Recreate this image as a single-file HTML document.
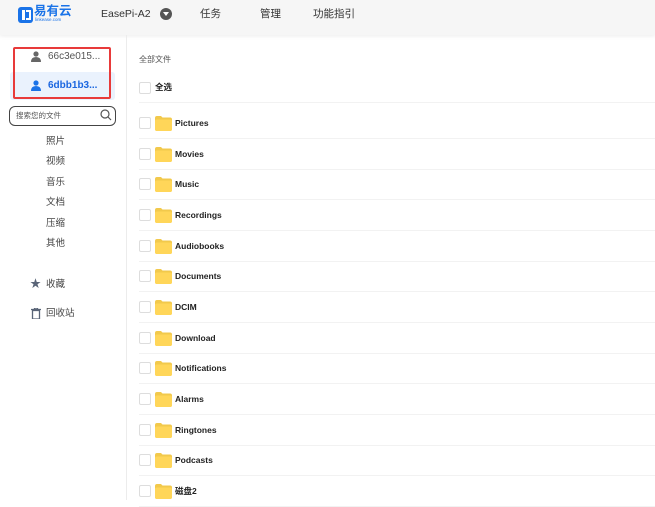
<!DOCTYPE html>
<html><head><meta charset="utf-8"><style>
body{margin:0;width:655px;height:500px;overflow:hidden;background:#fff;font-family:"Liberation Sans","Noto Sans CJK SC",sans-serif;position:relative}
.hdr{position:absolute;left:0;top:0;width:655px;height:35px;background:#f6f6f6;box-shadow:0 1px 4px rgba(0,0,0,.08)}
.hdr span{position:absolute;top:7px;font-size:10.5px;color:#333;line-height:14px}
.side{position:absolute;left:0;top:35px;width:126px;height:465px;border-right:1px solid #ececec}
.abs{position:absolute}
.cb{position:absolute;width:10px;height:10px;border:1px solid #ddd;border-radius:2px;background:#fff}
.row{position:absolute;left:139px;width:516px;height:30px;border-bottom:1px solid #f2f2f2}
.fold{position:absolute;left:16px;top:8px;width:17px;height:15px}
.nm{position:absolute;left:36px;top:8px;font-size:8.5px;font-weight:bold;color:#222;line-height:15px}
.cat{position:absolute;left:46px;font-size:9.5px;color:#444;line-height:12px}
</style></head><body>
<div class="hdr">
<div class="abs" style="left:18px;top:7px;width:15px;height:16px;background:#1a73e8;border-radius:3px"></div>
<div class="abs" style="left:22px;top:10px;width:3px;height:10px;background:#fff"></div>
<div class="abs" style="left:26px;top:10px;width:5px;height:10px;border:2px solid #fff;border-left:0;box-sizing:border-box"></div>
<span style="left:34px;top:4px;font-size:12.5px;font-weight:bold;color:#1a73e8">易有云</span>
<span style="left:35px;top:17px;font-size:4.5px;color:#1a73e8;line-height:6px">linkease.com</span>
<span style="left:101px">EasePi-A2</span>
<div class="abs" style="left:160px;top:8px;width:12px;height:12px;border-radius:50%;background:#555"></div>
<div class="abs" style="left:163px;top:12px;border-left:3px solid transparent;border-right:3px solid transparent;border-top:4px solid #fff"></div>
<span style="left:200px">任务</span><span style="left:260px">管理</span><span style="left:313px">功能指引</span>
</div>
<div class="side">
<div class="abs" style="left:10px;top:37px;width:105px;height:28px;background:#eaf2fd;border-radius:3px"></div>
<svg class="abs" style="left:31px;top:16px" width="10" height="11" viewBox="0 0 10 11"><circle cx="5" cy="3" r="2.6" fill="#666"/><path d="M0 11 Q0 6 5 6 Q10 6 10 11Z" fill="#666"/></svg>
<div class="abs" style="left:48px;top:15px;font-size:10px;color:#555;line-height:13px">66c3e015...</div>
<svg class="abs" style="left:31px;top:45px" width="10" height="11" viewBox="0 0 10 11"><circle cx="5" cy="3" r="2.6" fill="#1a73e8"/><path d="M0 11 Q0 6 5 6 Q10 6 10 11Z" fill="#1a73e8"/></svg>
<div class="abs" style="left:48px;top:44px;font-size:10px;color:#1a66e0;font-weight:bold;line-height:13px">6dbb1b3...</div>
<div class="abs" style="left:13px;top:12px;width:94px;height:48px;border:2.5px solid #e83a3a;border-radius:2px"></div>
<div class="abs" style="left:9px;top:71px;width:105px;height:18px;border:1px solid #444;border-radius:6px"></div>
<div class="abs" style="left:16px;top:75px;font-size:7.5px;color:#555;line-height:11px">搜索您的文件</div>
<svg class="abs" style="left:100px;top:74px" width="12" height="12"><circle cx="5" cy="5" r="4" fill="none" stroke="#555" stroke-width="1.2"/><path d="M8 8 L11 11" stroke="#555" stroke-width="1.2"/></svg>
<div class="cat" style="top:101px">照片</div><div class="cat" style="top:121px">视频</div><div class="cat" style="top:142px">音乐</div><div class="cat" style="top:162px">文档</div><div class="cat" style="top:183px">压缩</div><div class="cat" style="top:203px">其他</div>
<div class="abs" style="left:30px;top:243px;font-size:11px;color:#5a6578;line-height:13px">★</div><div class="cat" style="top:244px">收藏</div>
<svg class="abs" style="left:31px;top:273px" width="10" height="11"><path d="M0 1.5h10M3.5 1.5V0h3v1.5M1.5 2.5h7v8.5h-7z" fill="none" stroke="#5a6578" stroke-width="1.3"/></svg><div class="cat" style="top:273px">回收站</div>
</div>
<div class="abs" style="left:139px;top:54px;font-size:8px;color:#555;line-height:11px">全部文件</div>
<div class="row" style="top:72px"><div class="cb" style="left:0;top:10px"></div><div class="nm" style="left:16px;top:8px">全选</div></div>
<div id="rows"></div>
<script>
var n=["Pictures","Movies","Music","Recordings","Audiobooks","Documents","DCIM","Download","Notifications","Alarms","Ringtones","Podcasts","磁盘2"],h="";
n.forEach(function(s,i){var t=108+i*30.65;h+='<div class="row" style="top:'+t+'px"><div class="cb" style="left:0;top:9px"></div><svg class="fold" viewBox="0 0 17 15"><path d="M0 2 Q0 0 2 0 H6 L7.5 1.5 H15 Q17 1.5 17 3.5 V13 Q17 15 15 15 H2 Q0 15 0 13Z" fill="#f2c94c"/><path d="M0 5 Q0 3.5 2 3.5 H15 Q17 3.5 17 5.5 V13 Q17 15 15 15 H2 Q0 15 0 13Z" fill="#ffd659"/></svg><div class="nm">'+s+'</div></div>';});
document.getElementById("rows").innerHTML=h;
</script>
</body></html>
